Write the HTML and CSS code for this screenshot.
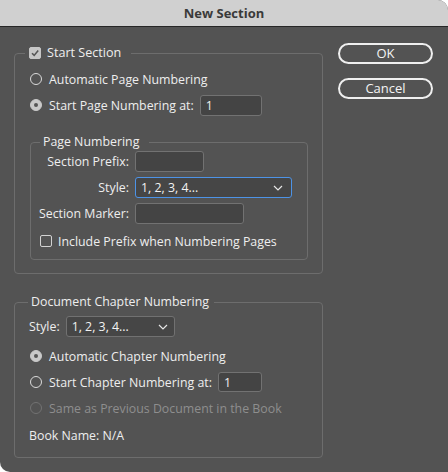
FILE: index.html
```html
<!DOCTYPE html>
<html>
<head>
<meta charset="utf-8">
<link rel="stylesheet" href="styles.css">
</head>
<body>
<div class="window">
  <div class="titlebar">New Section</div>
  <div class="content">
    <div class="main">
      <fieldset class="group g1">
        <legend class="legend l1"><span class="check checked"><svg viewBox="0 0 12 12" width="12" height="12"><path d="M3 6.2 L5.2 8.4 L9.2 3.6" fill="none" stroke="#555" stroke-width="1.6"/></svg></span>Start Section</legend>
        <div class="row r1"><span class="radio"></span>Automatic Page Numbering</div>
        <div class="row r2"><span class="radio on"></span>Start Page Numbering at:<span class="field f-start">1</span></div>
        <fieldset class="group inner">
          <legend class="legend l2">Page Numbering</legend>
          <div class="grid">
            <span class="lbl">Section Prefix:</span><span class="field f-prefix"></span>
            <span class="lbl">Style:</span><span class="select focus s1">1, 2, 3, 4...<svg class="chev" viewBox="0 0 10 6" width="10" height="6"><path d="M1 1 L5 5 L9 1" fill="none" stroke="#e6e6e6" stroke-width="1.2"/></svg></span>
            <span class="lbl">Section Marker:</span><span class="field f-marker"></span>
          </div>
          <div class="row r-inc"><span class="check"></span>Include Prefix when Numbering Pages</div>
        </fieldset>
      </fieldset>
      <fieldset class="group g2">
        <legend class="legend l3">Document Chapter Numbering</legend>
        <div class="row r-style"><span class="lbl2">Style:</span><span class="select s2">1, 2, 3, 4...<svg class="chev" viewBox="0 0 10 6" width="10" height="6"><path d="M1 1 L5 5 L9 1" fill="none" stroke="#e6e6e6" stroke-width="1.2"/></svg></span></div>
        <div class="row r-auto"><span class="radio on"></span>Automatic Chapter Numbering</div>
        <div class="row r-start"><span class="radio"></span>Start Chapter Numbering at:<span class="field f-chap">1</span></div>
        <div class="row r-same disabled"><span class="radio"></span>Same as Previous Document in the Book</div>
        <div class="row r-book">Book Name: N/A</div>
      </fieldset>
    </div>
    <div class="buttons">
      <button class="btn">OK</button>
      <button class="btn btn2">Cancel</button>
    </div>
  </div>
</div>
</body>
</html>
```
FILE: styles.css
```css
html, body {
  margin: 0;
  padding: 0;
  background: #ffffff;
}
body {
  font-family: "Open Sans", "Liberation Sans", sans-serif;
  font-size: 12.35px;
  font-weight: 500;
  color: #eeeeee;
}
.window {
  width: 448px;
  height: 472px;
  background: #535353;
  border-radius: 0 10px 0 10px;
  overflow: hidden;
}
.titlebar {
  height: 26px;
  background: #d0d0d0;
  border-bottom: 1px solid #262626;
  color: #3a3a3a;
  font-weight: 700;
  font-size: 13px;
  line-height: 26px;
  text-align: center;
}
.content {
  display: flex;
  align-items: flex-start;
}
.main {
  padding-left: 14px;
  display: flex;
  flex-direction: column;
}
.group {
  margin: 0;
  border: 1px solid #6d6d6d;
  border-radius: 4px;
  min-inline-size: 0;
}
.g1 {
  width: 309px;
  box-sizing: border-box;
  margin-top: 18px;
  padding: 7px 0 13px 15px;
}
.legend {
  line-height: 16px;
  height: 16px;
  display: flex;
  align-items: center;
  white-space: nowrap;
}
.l1 {
  margin-left: -5px;
  padding: 0 10px 0 4px;
  font-size: 12.6px;
}
.row {
  display: flex;
  align-items: center;
  height: 22px;
  white-space: nowrap;
}
.r2 { margin-top: 4px; }
.radio {
  width: 12px;
  height: 12px;
  box-sizing: border-box;
  border: 1px solid #dadada;
  border-radius: 50%;
  margin-right: 7px;
  flex: none;
  position: relative;
}
.radio.on {
  background: #c9c9c9;
  border-color: #c9c9c9;
}
.radio.on::after {
  content: "";
  position: absolute;
  left: 3px;
  top: 3px;
  width: 4px;
  height: 4px;
  border-radius: 50%;
  background: #555555;
}
.check {
  width: 12px;
  height: 12px;
  box-sizing: border-box;
  border: 1px solid #d2d2d2;
  border-radius: 2px;
  margin-right: 6px;
  flex: none;
  display: flex;
}
.check svg { display: block; margin: -1px; }
.check.checked {
  background: #c6c6c6;
  border-color: #c6c6c6;
}
.field {
  height: 21px;
  box-sizing: border-box;
  background: #444444;
  border: 1px solid #727272;
  border-radius: 3px;
  padding-left: 5px;
  display: flex;
  align-items: center;
  color: #f2f2f2;
}
.f-start { width: 62px; margin-left: 6px; }
.f-prefix { width: 69px; }
.f-marker { width: 109px; }
.f-chap { width: 44px; height: 20px; margin-left: 6px; }
.inner {
  width: 278px;
  box-sizing: border-box;
  margin-top: 18px;
  padding: 1px 0 7px 7px;
}
.l2 {
  padding: 0 10px 0 3px;
  margin-left: 2px;
}
.grid {
  display: grid;
  grid-template-columns: 91px auto;
  column-gap: 6px;
  row-gap: 5px;
  grid-auto-rows: 21px;
  justify-items: start;
  align-items: center;
}
.lbl {
  justify-self: end;
  white-space: nowrap;
}
.select {
  height: 21px;
  box-sizing: border-box;
  background: #464646;
  border: 1px solid #717171;
  border-radius: 3px;
  padding-left: 5px;
  display: flex;
  align-items: center;
  position: relative;
  color: #f2f2f2;
}
.select .chev {
  position: absolute;
  top: 7px;
}
.s1 {
  width: 157px;
  border-color: #4d93e6;
}
.s1 .chev { right: 8px; }
.s2 { width: 109px; margin-left: 6px; }
.s2 .chev { right: 6px; }
.r-inc { margin-top: 6px; margin-left: 2px; }
.g2 {
  width: 309px;
  box-sizing: border-box;
  margin-top: 20px;
  padding: 6px 0 11px 15px;
}
.l3 {
  margin-left: -2px;
  padding: 0 5px 0 3px;
}
.r-style { height: 21px; margin-left: -1px; }
.r-auto { margin-top: 8px; }
.r-start { margin-top: 4px; }
.r-same { margin-top: 4px; }
.disabled { color: #8e8e8e; }
.disabled .radio { border-color: #727272; }
.r-book { margin-top: 5px; margin-left: -1px; }
.buttons {
  margin-left: 15px;
  margin-top: 16px;
  display: flex;
  flex-direction: column;
  gap: 14px;
}
.btn {
  width: 95px;
  height: 21px;
  box-sizing: border-box;
  background: transparent;
  border: 2px solid #efefef;
  border-radius: 11px;
  color: #f4f4f4;
  font-family: "Open Sans", "Liberation Sans", sans-serif;
  font-size: 13px;
  font-weight: 500;
  padding: 0;
  line-height: 17px;
}
```
